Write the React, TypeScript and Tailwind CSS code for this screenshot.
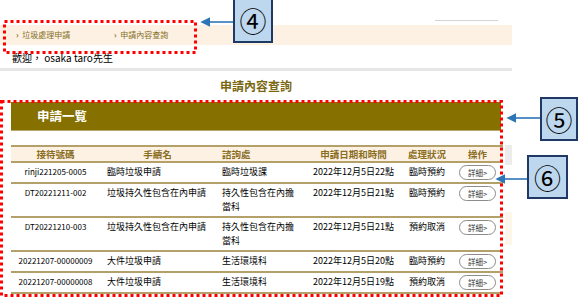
import React from 'react';

type Row = {
  id: string;
  name: string;
  office: string;
  date: string;
  status: string;
};

const rows: Row[] = [
  { id: 'rinji221205-0005', name: '臨時垃圾申請', office: '臨時垃圾課', date: '2022年12月5日22點', status: '臨時預約' },
  { id: 'DT20221211-002', name: '垃圾持久性包含在內申請', office: '持久性包含在內擔當科', date: '2022年12月5日21點', status: '臨時預約' },
  { id: 'DT20221210-003', name: '垃圾持久性包含在內申請', office: '持久性包含在內擔當科', date: '2022年12月5日21點', status: '預約取消' },
  { id: '20221207-00000009', name: '大件垃圾申請', office: '生活環境科', date: '2022年12月5日20點', status: '臨時預約' },
  { id: '20221207-00000008', name: '大件垃圾申請', office: '生活環境科', date: '2022年12月5日19點', status: '預約取消' },
];

const Callout = ({ label, className }: { label: string; className: string }) => (
  <div
    className={`absolute flex items-center justify-center border-2 border-[#203864] bg-[#bdd7ee] text-[27px] leading-none text-black font-['Noto_Sans_CJK_JP',sans-serif] ${className}`}
  >
    {label}
  </div>
);

export default function App() {
  return (
    <div className="relative w-[579px] h-[302px] overflow-hidden bg-white font-['Noto_Sans_CJK_TC',sans-serif] text-black">
      <div className="w-[512px]">
        {/* top strip with search underline */}
        <div className="h-[25px] flex justify-end items-start pt-[20px] pr-[14px]">
          <div className="w-[63px] h-px bg-[#d4d4d4]" />
        </div>

        {/* breadcrumb */}
        <div className="h-[20px] bg-[#fdf1e4] flex items-center pl-[16px] text-[8px] text-[#85701f]">
          <span className="w-[98px]"><b>›</b>&nbsp;&nbsp;垃圾處理申請</span>
          <span><b>›</b>&nbsp;&nbsp;申請內容查詢</span>
        </div>

        <div className="h-[23px] flex items-center pl-[12px] text-[10px] pt-[2px]">歡迎，&nbsp;osaka&nbsp;taro先生</div>
        <div className="h-[3px] bg-[#e6e6e6]" />

        <div className="h-[31px] flex items-center justify-center text-[12px] font-bold text-[#7b6710] pb-[1px]">
          申請內容查詢
        </div>

        <div className="px-[11px]">
          <div className="h-[29px] bg-[#857000] border-b border-[#b8a86c] flex items-center pl-[26px] text-[12.5px] font-bold text-white">
            申請一覧
          </div>

          <table className="mt-[14px] w-[492px] table-fixed border-collapse text-[9px] leading-[14px]">
            <colgroup>
              <col className="w-[89px]" />
              <col className="w-[115px]" />
              <col className="w-[90px]" />
              <col className="w-[97px]" />
              <col className="w-[50px]" />
              <col className="w-[51px]" />
            </colgroup>
            <thead>
              <tr className="bg-[#fdf1e4] border-y-2 border-[#b3a169] text-[9.5px] font-bold text-[#8a6d1e]">
                <th className="h-[16px] p-0 text-center">接待號碼</th>
                <th className="p-0 text-center">手續名</th>
                <th className="p-0 pl-[7px] text-left">諮詢處</th>
                <th className="p-0 text-center">申請日期和時間</th>
                <th className="p-0 text-center">處理狀況</th>
                <th className="p-0 text-center">操作</th>
              </tr>
            </thead>
            <tbody>
              {rows.map((r) => (
                <tr key={r.id} className="border-b-2 border-[#b3a169] align-top">
                  <td className="py-[2px] text-center text-[8px]">{r.id}</td>
                  <td className="py-[2px] pl-[7px]">{r.name}</td>
                  <td className="py-[2px] px-[7px]">{r.office}</td>
                  <td className="py-[2px] text-center">{r.date}</td>
                  <td className="py-[2px] text-center">{r.status}</td>
                  <td className="py-[2px]">
                    <div className="mx-auto w-[37px] h-[15px] rounded-full border border-[#8c8c8c] bg-white flex items-center justify-center text-[7.5px] leading-none text-[#333]">
                      詳細&gt;
                    </div>
                  </td>
                </tr>
              ))}
            </tbody>
          </table>
        </div>
      </div>

      {/* leftover page bits at the right edge */}
      <div className="absolute left-[505px] top-[145px] w-[7px] h-[20px] bg-[#e4e4e4] opacity-70" />
      <div className="absolute left-[505px] top-[212px] w-[7px] h-[33px] bg-[#fdf6ea]" />

      {/* annotation drawing */}
      <svg className="absolute inset-0 pointer-events-none" width="579" height="302">
        <defs>
          <marker id="ah" markerWidth="6" markerHeight="6" refX="5" refY="3" orient="auto" markerUnits="strokeWidth">
            <path d="M0,0 L6,3 L0,6 z" fill="#2e75b6" />
          </marker>
        </defs>
        <rect x="4.5" y="21.5" width="191" height="31" fill="none" stroke="#ff0000" strokeWidth="3" strokeDasharray="3 3" />
        <rect x="1.5" y="101.5" width="500" height="194" fill="none" stroke="#ff0000" strokeWidth="3" strokeDasharray="3 3" />
        <line x1="233" y1="22" x2="202" y2="22" stroke="#2e75b6" strokeWidth="1.6" markerEnd="url(#ah)" />
        <line x1="540" y1="118" x2="508" y2="118" stroke="#2e75b6" strokeWidth="1.6" markerEnd="url(#ah)" />
        <line x1="527" y1="179" x2="497" y2="179" stroke="#2e75b6" strokeWidth="1.6" markerEnd="url(#ah)" />
      </svg>

      <Callout label="④" className="left-[233px] top-[-2px] w-[40px] h-[45px]" />
      <Callout label="⑤" className="left-[540px] top-[97px] w-[38px] h-[44px]" />
      <Callout label="⑥" className="left-[527px] top-[155px] w-[41px] h-[44px]" />
    </div>
  );
}
